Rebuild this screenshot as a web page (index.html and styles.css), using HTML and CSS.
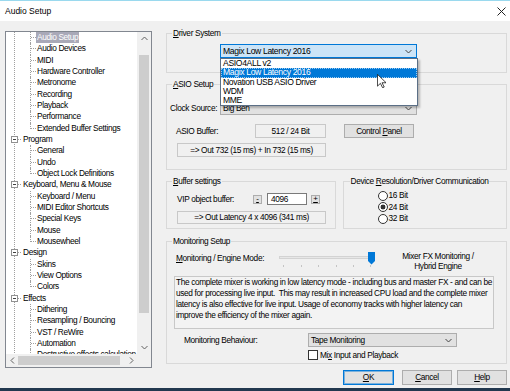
FILE: index.html
```html
<!DOCTYPE html>
<html lang="en">
<head>
    <meta charset="UTF-8">
    <title>Audio Setup</title>
    <link rel="stylesheet" href="styles.css">
</head>
<body>
<div class="titlebar">
    <span>Audio Setup</span>
    <svg class="close" width="9" height="9" viewBox="0 0 9 9"><path d="M0.5 0.5l8 8M8.5 0.5l-8 8" stroke="#222" stroke-width="1" fill="none"/></svg>
</div>

<div class="client">
    <!-- settings tree -->
    <div class="tree">
        <div class="tree-list">
            <div class="row leaf sel"><span class="ln"></span><span class="t">Audio Setup</span></div>
            <div class="row leaf"><span class="ln"></span><span class="t">Audio Devices</span></div>
            <div class="row leaf"><span class="ln"></span><span class="t">MIDI</span></div>
            <div class="row leaf"><span class="ln"></span><span class="t">Hardware Controller</span></div>
            <div class="row leaf"><span class="ln"></span><span class="t">Metronome</span></div>
            <div class="row leaf"><span class="ln"></span><span class="t">Recording</span></div>
            <div class="row leaf"><span class="ln"></span><span class="t">Playback</span></div>
            <div class="row leaf"><span class="ln"></span><span class="t">Performance</span></div>
            <div class="row leaf end"><span class="ln"></span><span class="t">Extended Buffer Settings</span></div>
            <div class="row node"><span class="pm"></span><span class="hl"></span><span class="t">Program</span></div>
            <div class="row leaf"><span class="ln"></span><span class="t">General</span></div>
            <div class="row leaf"><span class="ln"></span><span class="t">Undo</span></div>
            <div class="row leaf end"><span class="ln"></span><span class="t">Object Lock Definitions</span></div>
            <div class="row node"><span class="pm"></span><span class="hl"></span><span class="t">Keyboard, Menu &amp; Mouse</span></div>
            <div class="row leaf"><span class="ln"></span><span class="t">Keyboard / Menu</span></div>
            <div class="row leaf"><span class="ln"></span><span class="t">MIDI Editor Shortcuts</span></div>
            <div class="row leaf"><span class="ln"></span><span class="t">Special Keys</span></div>
            <div class="row leaf"><span class="ln"></span><span class="t">Mouse</span></div>
            <div class="row leaf end"><span class="ln"></span><span class="t">Mousewheel</span></div>
            <div class="row node"><span class="pm"></span><span class="hl"></span><span class="t">Design</span></div>
            <div class="row leaf"><span class="ln"></span><span class="t">Skins</span></div>
            <div class="row leaf"><span class="ln"></span><span class="t">View Options</span></div>
            <div class="row leaf end"><span class="ln"></span><span class="t">Colors</span></div>
            <div class="row node"><span class="pm"></span><span class="hl"></span><span class="t">Effects</span></div>
            <div class="row leaf"><span class="ln"></span><span class="t">Dithering</span></div>
            <div class="row leaf"><span class="ln"></span><span class="t">Resampling / Bouncing</span></div>
            <div class="row leaf"><span class="ln"></span><span class="t">VST / ReWire</span></div>
            <div class="row leaf"><span class="ln"></span><span class="t">Automation</span></div>
            <div class="row leaf"><span class="ln"></span><span class="t">Destructive effects calculation</span></div>
        </div>
        <div class="vs">
            <div class="arr"><svg width="7" height="5"><polyline points="0.5,4 3.5,1 6.5,4" fill="none" stroke="#606060"/></svg></div>
            <div class="track"><div class="thumb"></div></div>
            <div class="arr"><svg width="7" height="5"><polyline points="0.5,1 3.5,4 6.5,1" fill="none" stroke="#606060"/></svg></div>
        </div>
        <div class="hs">
            <div class="harr"><svg width="5" height="7"><polyline points="4,0.5 1,3.5 4,6.5" fill="none" stroke="#606060"/></svg></div>
            <div class="htrack"><div class="hthumb"></div></div>
            <div class="harr"><svg width="5" height="7"><polyline points="1,0.5 4,3.5 1,6.5" fill="none" stroke="#606060"/></svg></div>
        </div>
        <div class="corner"></div>
    </div>

    <!-- settings page -->
    <div class="panel">
        <div class="group driver">
            <span class="legend"><u>D</u>river System</span>
            <div class="combo-wrap">
                <div class="combo open"><span>Magix Low Latency 2016</span><svg width="7" height="5"><polyline points="0.5,1 3.5,4 6.5,1" fill="none" stroke="#444"/></svg></div>
                <div class="dd">
                    <div>ASIO4ALL v2</div>
                    <div class="on">Magix Low Latency 2016</div>
                    <div>Novation USB ASIO Driver</div>
                    <div>WDM</div>
                    <div>MME</div>
                </div>
                <svg class="cursor" width="9" height="14" viewBox="0 0 12 19"><path d="M0.5 0.5v16l4-3.8 3 6 2.2-1-3-5.8h5.6z" fill="#fff" stroke="#000" stroke-width="1"/></svg>
            </div>
        </div>

        <div class="group asio">
            <span class="legend"><u>A</u>SIO Setup</span>
            <div class="clock">
                <span class="lbl">Clock Source:</span>
                <div class="combo"><span>Big Ben</span><svg width="7" height="5"><polyline points="0.5,1 3.5,4 6.5,1" fill="none" stroke="#444"/></svg></div>
            </div>
            <div class="bufrow">
                <span class="lbl">ASIO Buffer:</span>
                <div class="val">512 / 24 Bit</div>
                <div class="btn cp"><span>Control <u>P</u>anel</span></div>
            </div>
            <div class="val out">=&gt; Out 732 (15 ms) + In 732 (15 ms)</div>
        </div>

        <div class="split">
            <div class="group buffer">
                <span class="legend"><u>B</u>uffer settings</span>
                <div class="vip">
                    <span class="lbl">VIP object buffer:</span>
                    <div class="sbtn"><u>-</u></div>
                    <div class="num">4096</div>
                    <div class="sbtn"><u>+</u></div>
                </div>
                <div class="val out lat">=&gt; Out Latency 4 x 4096 (341 ms)</div>
            </div>
            <div class="group device">
                <span class="legend">Device <u>R</u>esolution/Driver Communication</span>
                <div class="radios">
                    <div class="radio"><span class="rb"></span><span>16 Bit</span></div>
                    <div class="radio"><span class="rb on"></span><span>24 Bit</span></div>
                    <div class="radio"><span class="rb"></span><span>32 Bit</span></div>
                </div>
            </div>
        </div>

        <div class="group monitor">
            <span class="legend">Monitoring Setup</span>
            <div class="engine">
                <span class="lbl"><u>M</u>onitoring / Engine Mode:</span>
                <svg class="slider" width="97" height="20" viewBox="0 0 97 20">
                    <rect x="0.5" y="5.5" width="94" height="2" fill="#e7e7e7" stroke="#d3d3d3"/>
                    <g stroke="#c4c4c4">
                        <line x1="4.5" y1="14" x2="4.5" y2="16"/>
                        <line x1="22.5" y1="14" x2="22.5" y2="16"/>
                        <line x1="39.5" y1="14" x2="39.5" y2="16"/>
                        <line x1="57.5" y1="14" x2="57.5" y2="16"/>
                        <line x1="74.5" y1="14" x2="74.5" y2="16"/>
                        <line x1="91.5" y1="14" x2="91.5" y2="16"/>
                    </g>
                    <path d="M89 1h7v9l-3.5 3.5l-3.5-3.5z" fill="#0078d7"/>
                </svg>
                <span class="mode">Mixer FX Monitoring /<br>Hybrid Engine</span>
            </div>
            <div class="desc">The complete mixer is working in low latency mode - including bus and master FX - and can be<br>used for processing live input.&nbsp; This may result in increased CPU load and the complete mixer<br>latency is also effective for live input. Usage of economy tracks with higher latency can<br>improve the efficiency of the mixer again.</div>
            <div class="behave">
                <span class="lbl">Monitoring Behaviour:</span>
                <div class="combo"><span>Tape Monitoring</span><svg width="7" height="5"><polyline points="0.5,1 3.5,4 6.5,1" fill="none" stroke="#444"/></svg></div>
            </div>
            <div class="check"><span class="cb"></span><span>Mi<u>x</u> Input and Playback</span></div>
        </div>
    </div>
</div>

<div class="buttons">
    <div class="btn ok"><span><u>O</u>K</span></div>
    <div class="btn cancel"><span><u>C</u>ancel</span></div>
    <div class="btn help"><span><u>H</u>elp</span></div>
</div>
<div class="bottom"></div>
</body>
</html>
```

FILE: styles.css
```css
* {
    margin: 0;
    padding: 0;
    box-sizing: border-box;
}

body {
    width: 510px;
    height: 391px;
    overflow: hidden;
    background: #f0f0f0;
    color: #000;
    font: 8.3px/11px "Liberation Sans", Arial, sans-serif;
    letter-spacing: -0.35px;
    white-space: nowrap;
}

u {
    text-decoration: underline;
    text-underline-offset: 1px;
}

.titlebar {
    height: 21px;
    background: #fff;
    border-top: 1px solid #9ad9ee;
    display: flex;
    align-items: center;
    justify-content: space-between;
    padding: 0 4px 0 5px;
    font-size: 8.5px;
    letter-spacing: 0;
}

.client {
    display: flex;
    align-items: flex-start;
    padding: 10px 0 0 5px;
}

/* tree */
.tree {
    width: 147px;
    height: 337px;
    border: 1px solid #828790;
    background: #fff;
    display: grid;
    grid-template-columns: 131px 14px;
    grid-template-rows: 322px 13px;
}

.tree-list {
    overflow: hidden;
    background: repeating-linear-gradient(to bottom, #a0a0a0 0 1px, transparent 1px 2px) 8px 0 / 1px 100% no-repeat;
}

.row {
    height: 11.333px;
    display: flex;
    align-items: center;
}

.row .t {
    padding: 0 1px;
    line-height: 11px;
}

.row.sel .t {
    background: #a9a9b8;
    color: #fff;
}

.leaf {
    padding-left: 24px;
}

.ln {
    width: 6px;
    align-self: stretch;
    border-left: 1px dotted #a0a0a0;
    background: repeating-linear-gradient(to right, #a0a0a0 0 1px, transparent 1px 2px) 0 50% / 100% 1px no-repeat;
}

.end .ln {
    align-self: flex-start;
    height: 6px;
    background-position: 0 100%;
}

.node {
    padding-left: 5px;
}

.pm {
    width: 7px;
    height: 7px;
    border: 1px solid #919191;
    background: #fff linear-gradient(#404040, #404040) center / 3px 1px no-repeat;
}

.hl {
    width: 4px;
    height: 1px;
    background: repeating-linear-gradient(to right, #a0a0a0 0 1px, transparent 1px 2px);
}

.vs {
    background: #f0f0f0;
    display: flex;
    flex-direction: column;
}

.arr {
    height: 13px;
    display: flex;
    align-items: center;
    justify-content: center;
}

.track {
    flex: 1;
    padding: 10px 2px 0;
}

.thumb {
    height: 258px;
    background: #cdcdcd;
}

.hs {
    background: #f0f0f0;
    display: flex;
}

.harr {
    width: 12px;
    display: flex;
    align-items: center;
    justify-content: center;
}

.htrack {
    flex: 1;
    padding: 2px 0;
}

.hthumb {
    width: 102px;
    height: 100%;
    background: #cdcdcd;
}

.corner {
    background: #f0f0f0;
}

/* right side */
.panel {
    width: 341px;
    margin: 2px 0 0 14px;
}

.group {
    border: 1px solid #d9d9d9;
}

.legend {
    display: block;
    width: fit-content;
    height: 11px;
    margin: -6px 0 0 5px;
    padding: 0 1px;
    background: #f0f0f0;
}

.combo {
    height: 14px;
    border: 1px solid #adadad;
    background: #e1e1e1;
    display: flex;
    align-items: center;
    justify-content: space-between;
    padding: 0 4px 0 2px;
}

.combo.open {
    background: #cce4f7;
    border-color: #0078d7;
    font-size: 8.6px;
}

.combo-wrap {
    position: relative;
    width: 197px;
    margin: 5px 0 14px 53px;
}

.dd {
    position: absolute;
    left: 0;
    top: 14px;
    width: 198px;
    border: 1px solid #5b6f86;
    background: #fff;
    box-shadow: 2px 2px 2px rgba(0, 0, 0, .25);
    font-size: 8.6px;
    z-index: 2;
}

.dd div {
    height: 9.25px;
    line-height: 9.25px;
    padding-left: 2px;
}

.dd div.on {
    background: #0078d7;
    color: #fff;
    outline: 1px dotted #9ccaf0;
    outline-offset: -1px;
}

.cursor {
    position: absolute;
    left: 157px;
    top: 30px;
    z-index: 3;
}

.asio {
    margin-top: 11px;
}

.clock {
    display: flex;
    align-items: center;
    margin: 11px 0 0 3px;
}

.clock .lbl {
    width: 50px;
}

.clock .combo {
    width: 197px;
}

.bufrow {
    display: flex;
    align-items: center;
    margin: 9px 0 0 9px;
}

.bufrow .lbl {
    width: 79px;
}

.val {
    height: 14px;
    border: 1px solid #c8c8c8;
    background: #f0f0f0;
    text-align: center;
    line-height: 12px;
}

.bufrow .val {
    width: 71px;
}

.btn {
    height: 14px;
    border: 1px solid #adadad;
    background: #e1e1e1;
    display: flex;
    align-items: center;
    justify-content: center;
}

.cp {
    width: 70px;
    margin-left: 18px;
}

.out {
    width: 149px;
    margin: 5px 0 12px 10px;
}

.split {
    display: flex;
    gap: 7px;
    margin-top: 11px;
}

.buffer {
    width: 170px;
}

.device {
    width: 165px;
}

.device .legend {
    margin-left: 6px;
}

.vip {
    display: flex;
    align-items: center;
    height: 12px;
    margin: 6px 0 0 10px;
}

.vip .lbl {
    width: 76px;
}

.sbtn {
    width: 9px;
    height: 9px;
    border: 1px solid #adadad;
    background: #e1e1e1;
    font-size: 8px;
    line-height: 6px;
    text-align: center;
    letter-spacing: 0;
}

.num {
    width: 40px;
    height: 12px;
    margin: 0 4px 0 5px;
    border: 1px solid #7a7a7a;
    background: #fff;
    padding-left: 3px;
    line-height: 10px;
}

.out.lat {
    height: 13px;
    line-height: 11px;
    margin: 6px 0 4px 10px;
}

.radios {
    margin-top: 3px;
    padding-left: 34px;
}

.radio {
    height: 11.5px;
    display: flex;
    align-items: center;
}

.rb {
    width: 10px;
    height: 10px;
    margin-right: 1px;
    border: 1px solid #333;
    border-radius: 50%;
    background: #fff;
}

.rb.on {
    background: radial-gradient(circle, #333 0 2.2px, #fff 2.7px);
}

.monitor {
    margin-top: 12px;
}

.engine {
    display: flex;
    align-items: flex-start;
    height: 20px;
    margin-top: 4px;
}

.engine .lbl {
    width: 103px;
    margin-left: 9px;
    line-height: 14px;
}

.mode {
    flex: 1;
    margin-right: 6px;
    text-align: center;
    line-height: 10px;
}

.desc {
    width: 320px;
    height: 53px;
    margin: 5px 0 0 7px;
    padding: 0 0 0 1px;
    border: 1px solid #c8c8c8;
    background: #f3f3f3;
    overflow: hidden;
}

.behave {
    display: flex;
    align-items: center;
    margin: 4px 0 0 17px;
}

.behave .lbl {
    width: 124px;
}

.behave .combo {
    width: 149px;
}

.check {
    display: flex;
    align-items: center;
    height: 10px;
    margin: 3px 0 3px 141px;
}

.cb {
    width: 10px;
    height: 10px;
    margin-right: 2px;
    border: 1px solid #333;
    background: #fff;
}

/* dialog buttons */
.buttons {
    display: flex;
    justify-content: flex-end;
    height: 15px;
    margin-top: 2px;
    padding-right: 3px;
}

.buttons .btn {
    height: 15px;
    width: 50px;
}

.buttons .ok {
    width: 51px;
    margin-right: 8px;
    border-color: #0078d7;
    box-shadow: inset 0 0 0 1px rgba(0, 120, 215, .45);
}

.buttons .cancel {
    margin-right: 5px;
}

.bottom {
    height: 3px;
    margin-top: 3px;
    background: #22384f;
}
```
